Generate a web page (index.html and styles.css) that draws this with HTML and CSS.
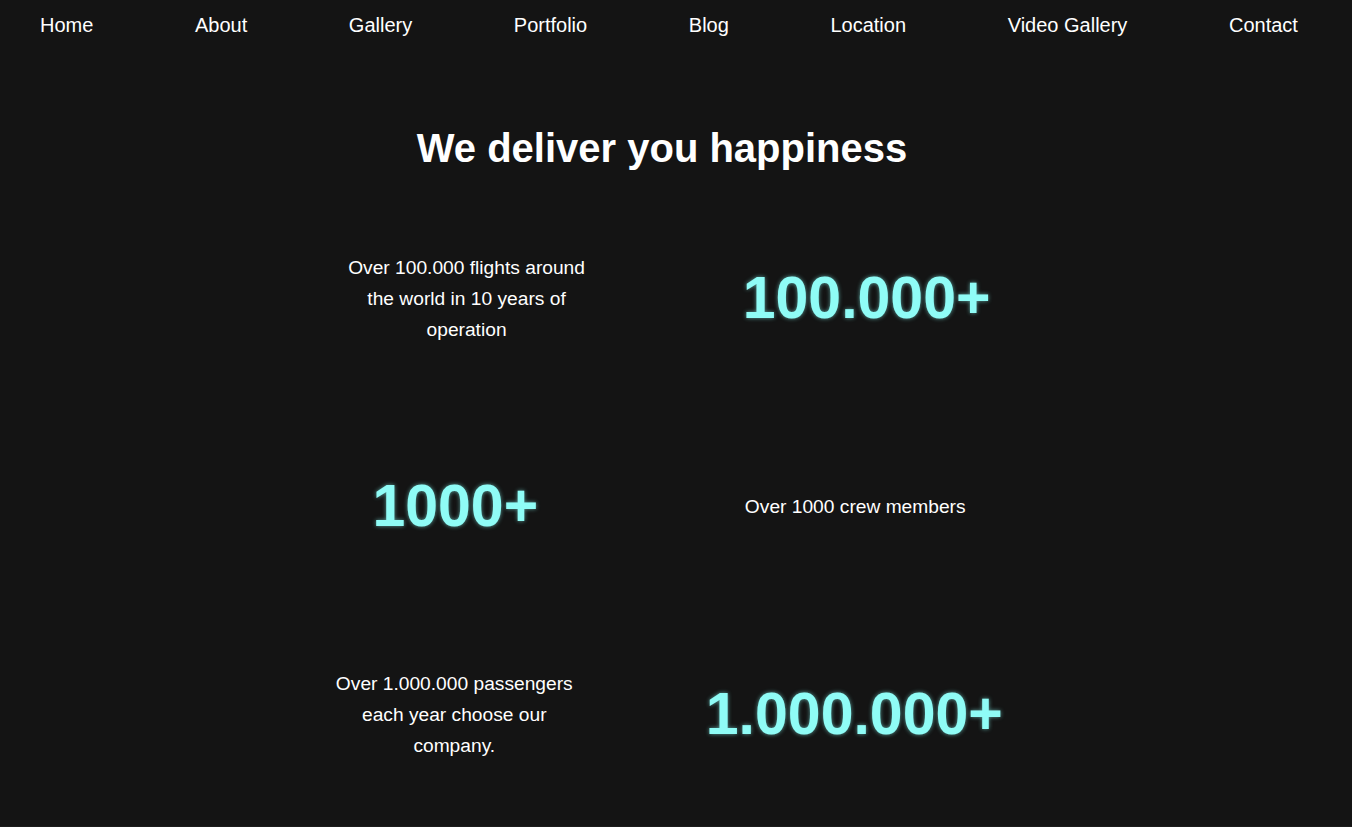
FILE: index.html
```html
<!DOCTYPE html>
<html lang="en">
<head>
<meta charset="utf-8">
<title>We deliver you happiness</title>
<link rel="stylesheet" href="styles.css">
</head>
<body>
<nav class="nav">
  <a href="#">Home</a>
  <a href="#">About</a>
  <a href="#">Gallery</a>
  <a href="#">Portfolio</a>
  <a href="#">Blog</a>
  <a href="#">Location</a>
  <a href="#">Video Gallery</a>
  <a href="#">Contact</a>
</nav>
<main class="page">
  <h1 class="title">We deliver you happiness</h1>
  <section class="stats">
    <div class="row">
      <p class="desc">Over 100.000 flights around the world in 10 years of operation</p>
      <div class="num">100.000+</div>
    </div>
    <div class="row">
      <div class="num">1000+</div>
      <p class="desc desc-short">Over 1000 crew members</p>
    </div>
    <div class="row">
      <p class="desc">Over 1.000.000 passengers each year choose our company.</p>
      <div class="num">1.000.000+</div>
    </div>
  </section>
</main>
</body>
</html>
```
FILE: styles.css
```css
html {
  background: #1c1c1c;
}
body {
  margin: 0;
  background: #141414;
  color: #ffffff;
  font-family: "Liberation Sans", Arial, sans-serif;
  min-height: 826px;
}
.nav {
  display: flex;
  justify-content: space-between;
  align-items: center;
  height: 50px;
  padding: 0 54px 0 40px;
}
.nav a {
  color: #ffffff;
  text-decoration: none;
  font-size: 20px;
}
.page {
  padding-right: 28px;
}
.title {
  margin: 75px 0 23px;
  text-align: center;
  font-size: 40px;
  font-weight: bold;
  line-height: 46px;
}
.stats {
  width: 800px;
  margin-left: 269px;
}
.row {
  display: flex;
  justify-content: space-around;
  align-items: center;
  height: 208px;
}
.desc {
  margin: 0;
  width: 238px;
  text-align: center;
  font-size: 19.2px;
  line-height: 31px;
}
.desc-short {
  width: auto;
}
.num {
  font-size: 59px;
  font-weight: bold;
  color: #8ffcf6;
  text-shadow: 0 0 4px rgba(120, 220, 214, 0.7);
  line-height: 70px;
}
```
